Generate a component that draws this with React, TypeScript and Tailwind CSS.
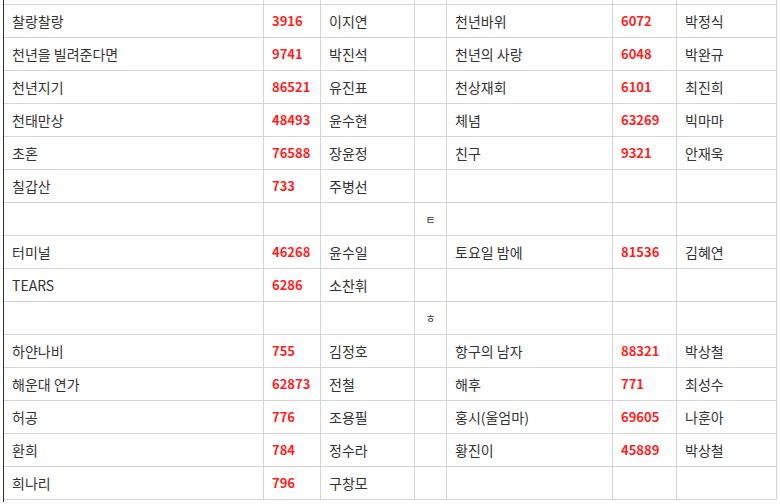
import React from "react";

type Row = { t1?: string; n1?: string; s1?: string; jamo?: string; t2?: string; n2?: string; s2?: string };

const rows: Row[] = [
  {},
  { t1: "찰랑찰랑", n1: "3916", s1: "이지연", t2: "천년바위", n2: "6072", s2: "박정식" },
  { t1: "천년을 빌려준다면", n1: "9741", s1: "박진석", t2: "천년의 사랑", n2: "6048", s2: "박완규" },
  { t1: "천년지기", n1: "86521", s1: "유진표", t2: "천상재회", n2: "6101", s2: "최진희" },
  { t1: "천태만상", n1: "48493", s1: "윤수현", t2: "체념", n2: "63269", s2: "빅마마" },
  { t1: "초혼", n1: "76588", s1: "장윤정", t2: "친구", n2: "9321", s2: "안재욱" },
  { t1: "칠갑산", n1: "733", s1: "주병선" },
  { jamo: "ㅌ" },
  { t1: "터미널", n1: "46268", s1: "윤수일", t2: "토요일 밤에", n2: "81536", s2: "김혜연" },
  { t1: "TEARS", n1: "6286", s1: "소찬휘" },
  { jamo: "ㅎ" },
  { t1: "하얀나비", n1: "755", s1: "김정호", t2: "항구의 남자", n2: "88321", s2: "박상철" },
  { t1: "해운대 연가", n1: "62873", s1: "전철", t2: "해후", n2: "771", s2: "최성수" },
  { t1: "허공", n1: "776", s1: "조용필", t2: "홍시(울엄마)", n2: "69605", s2: "나훈아" },
  { t1: "환희", n1: "784", s1: "정수라", t2: "황진이", n2: "45889", s2: "박상철" },
  { t1: "희나리", n1: "796", s1: "구창모" },
];

const cell = "h-full flex items-center px-2 border-r border-[#d4d4d4] shrink-0 whitespace-nowrap";
const num = "font-bold text-[13px] text-[#ff1f1f]";

export default function App() {
  return (
    <div
      className="w-[780px] h-[504px] overflow-hidden bg-white pl-[3px]"
      style={{ fontFamily: '"Noto Sans CJK KR", "Noto Sans", sans-serif' }}
    >
      <div className="h-[502px] w-[774px] overflow-hidden border-l border-[#333]">
        <div className="-mt-[28px] flex flex-col text-[14px] text-[#333]">
          {rows.map((r, i) => (
            <div key={i} className="flex h-[33px] border-b border-[#d4d4d4]">
              <div className={`${cell} w-[260px]`}>{r.t1}</div>
              <div className={`${cell} w-[57px] ${num}`}>{r.n1}</div>
              <div className={`${cell} w-[94px]`}>{r.s1}</div>
              <div className={`${cell} w-[32px] justify-center px-0 text-[11px]`}>{r.jamo}</div>
              <div className={`${cell} w-[166px]`}>{r.t2}</div>
              <div className={`${cell} w-[64px] ${num}`}>{r.n2}</div>
              <div className={`${cell} w-[100px]`}>{r.s2}</div>
            </div>
          ))}
        </div>
      </div>
    </div>
  );
}
